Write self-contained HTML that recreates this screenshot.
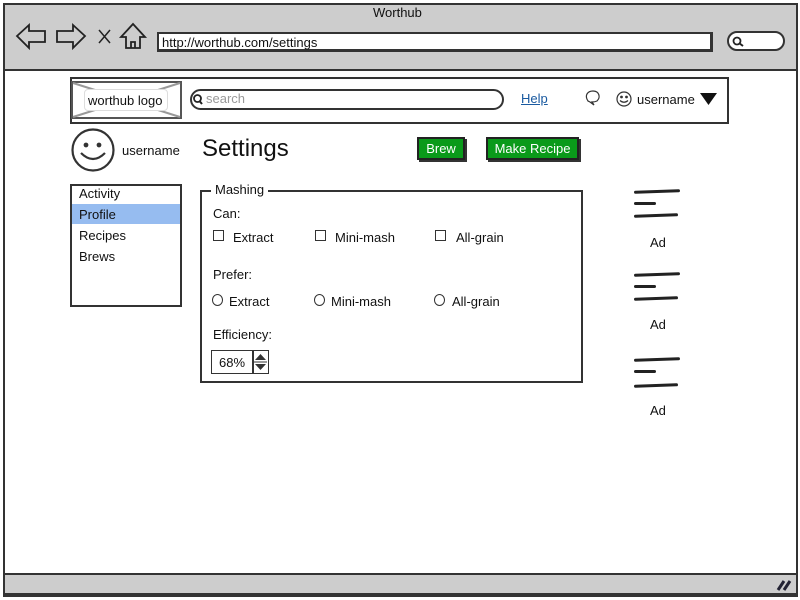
<!DOCTYPE html>
<html><head><meta charset="utf-8"><style>
*{margin:0;padding:0;box-sizing:border-box}
body{width:800px;height:600px;background:#fff;position:relative;overflow:hidden;font-family:"Liberation Sans",sans-serif;color:#111;font-size:13px}
.a{position:absolute}
.t{position:absolute;white-space:nowrap;line-height:1}
.btn{position:absolute;background:#0a9a1a;color:#fff;border:2px solid #222;box-shadow:2px 2px 0 #333;font-size:13px;text-align:center;line-height:19px}
.ad{position:absolute;width:50px}
.ad i{position:absolute;left:0;height:3px;background:#222;border-radius:2px}
.cb{position:absolute;width:11px;height:11px;border:1.5px solid #333}
.rb{position:absolute;width:11px;height:12px;border:1.8px solid #333;border-radius:50%}
</style></head><body>
<div class="a" style="left:3px;top:3px;width:795px;height:594px;border:2px solid #333"></div>
<div class="a" style="left:3px;top:3px;width:795px;height:68px;background:#cdcdcd;border:2px solid #333"></div>
<div class="t" style="left:373px;top:6px;font-size:13px">Worthub</div>
<svg class="a" style="left:14px;top:22px" width="140" height="30" viewBox="0 0 140 30" fill="none" stroke="#222" stroke-width="1.8">
<path d="M3 14 L15 3 L15 9 L31 9 L31 20 L15 20 L15 26 Z"/>
<path d="M71 14 L59 3 L59 9 L43 9 L43 20 L59 20 L59 26 Z"/>
<path d="M85 8 L96 21 M96 8 L85 21" stroke-width="1.5"/>
<path d="M119 2 L107 15 L112 15 L112 26 L126 26 L126 15 L131 15 Z M117 26 L117 20 L121 20 L121 26"/>
</svg>
<div class="a" style="left:157px;top:32px;width:556px;height:20px;background:#fff;border:2px solid #333;border-right-width:3px;border-bottom-width:3px"></div>
<div class="t" style="left:162px;top:36px;font-size:13px">http://worthub.com/settings</div>
<div class="a" style="left:727px;top:31px;width:58px;height:20px;background:#fff;border:2px solid #333;border-radius:10px"></div>
<svg class="a" style="left:732px;top:36px" width="12" height="12"><circle cx="5" cy="5" r="3.5" fill="none" stroke="#222" stroke-width="1.8"/><path d="M7 7 L11 10" stroke="#222" stroke-width="2"/></svg>

<div class="a" style="left:70px;top:77px;width:659px;height:47px;border:2px solid #333"></div>
<div class="a" style="left:71px;top:81px;width:111px;height:38px;background:#fff;border:2px solid #555"></div>
<svg class="a" style="left:71px;top:81px" width="111" height="38"><path d="M2 2 L109 36 M109 2 L2 36" stroke="#999" stroke-width="2"/></svg>
<div class="a" style="left:84px;top:89px;width:84px;height:22px;background:#fff;border-radius:4px;border:1px solid #ddd"></div>
<div class="t" style="left:88px;top:94px;font-size:13px">worthub logo</div>
<div class="a" style="left:190px;top:89px;width:314px;height:21px;border:2px solid #333;border-radius:11px"></div>
<svg class="a" style="left:192px;top:93px" width="12" height="13"><circle cx="5.5" cy="5.5" r="3.5" fill="none" stroke="#222" stroke-width="1.8"/><path d="M7.5 8 L10 11" stroke="#222" stroke-width="2"/></svg>
<div class="t" style="left:206px;top:92px;font-size:13px;color:#999">search</div>
<div class="t" style="left:521px;top:92px;font-size:13px;color:#1a5aa0;text-decoration:underline">Help</div>
<svg class="a" style="left:584px;top:89px" width="50" height="20" fill="none" stroke="#333" stroke-width="1.2"><path d="M4 12 C0 6 4 2 9 2 C15 2 17 8 13 12 C11 13 9 13 8 13 L10 16 L6 13 Z"/><circle cx="40" cy="10" r="7"/><circle cx="37.5" cy="8" r=".8" fill="#333"/><circle cx="42.5" cy="8" r=".8" fill="#333"/><path d="M36 11.5 Q40 15 44 11.5"/></svg>
<div class="t" style="left:637px;top:93px;font-size:13px">username</div>
<svg class="a" style="left:700px;top:93px" width="17" height="13"><path d="M0 0 L17 0 L8.5 12 Z" fill="#111"/></svg>

<svg class="a" style="left:70px;top:127px" width="47" height="47" fill="none" stroke="#333" stroke-width="2.2"><circle cx="23" cy="23" r="20.5"/><circle cx="16" cy="18" r="1.3" fill="#333"/><circle cx="29" cy="18" r="1.3" fill="#333"/><path d="M11 26 Q23 38 35 26"/></svg>
<div class="t" style="left:122px;top:144px;font-size:13px">username</div>
<div class="t" style="left:202px;top:137px;font-size:24px">Settings</div>
<div class="btn" style="left:417px;top:137px;width:48px;height:23px">Brew</div>
<div class="btn" style="left:486px;top:137px;width:93px;height:23px">Make Recipe</div>

<div class="a" style="left:70px;top:184px;width:112px;height:123px;border:2px solid #333"></div>
<div class="a" style="left:72px;top:204px;width:108px;height:20px;background:#96bcf0"></div>
<div class="t" style="left:79px;top:187px">Activity</div>
<div class="t" style="left:79px;top:208px">Profile</div>
<div class="t" style="left:79px;top:229px">Recipes</div>
<div class="t" style="left:79px;top:250px">Brews</div>

<div class="a" style="left:200px;top:190px;width:383px;height:193px;border:2px solid #333"></div>
<div class="t" style="left:211px;top:183px;background:#fff;padding:0 4px">Mashing</div>
<div class="t" style="left:213px;top:207px">Can:</div>
<div class="cb" style="left:213px;top:230px"></div><div class="t" style="left:233px;top:231px">Extract</div>
<div class="cb" style="left:315px;top:230px"></div><div class="t" style="left:335px;top:231px">Mini-mash</div>
<div class="cb" style="left:435px;top:230px"></div><div class="t" style="left:456px;top:231px">All-grain</div>
<div class="t" style="left:213px;top:268px">Prefer:</div>
<div class="rb" style="left:212px;top:294px"></div><div class="t" style="left:229px;top:295px">Extract</div>
<div class="rb" style="left:314px;top:294px"></div><div class="t" style="left:331px;top:295px">Mini-mash</div>
<div class="rb" style="left:434px;top:294px"></div><div class="t" style="left:452px;top:295px">All-grain</div>
<div class="t" style="left:213px;top:328px">Efficiency:</div>
<div class="a" style="left:211px;top:350px;width:58px;height:24px;border:1.5px solid #333"></div>
<div class="t" style="left:219px;top:356px">68%</div>
<div class="a" style="left:252px;top:351px;width:1.5px;height:22px;background:#333"></div>
<svg class="a" style="left:254px;top:352px" width="13" height="20"><path d="M1 8 L6.5 2 L12 8 Z M1 12 L6.5 18 L12 12 Z" fill="#333"/><path d="M0 10 L13 10" stroke="#333"/></svg>

<div class="ad" style="left:634px;top:190px"><i style="top:0;width:46px;transform:rotate(-2deg)"></i><i style="top:12px;width:22px"></i><i style="top:24px;width:44px;transform:rotate(-2deg)"></i></div>
<div class="t" style="left:650px;top:236px">Ad</div>
<div class="ad" style="left:634px;top:273px"><i style="top:0;width:46px;transform:rotate(-2deg)"></i><i style="top:12px;width:22px"></i><i style="top:24px;width:44px;transform:rotate(-2deg)"></i></div>
<div class="t" style="left:650px;top:318px">Ad</div>
<div class="ad" style="left:634px;top:358px"><i style="top:0;width:46px;transform:rotate(-2deg)"></i><i style="top:12px;width:22px"></i><i style="top:26px;width:44px;transform:rotate(-2deg)"></i></div>
<div class="t" style="left:650px;top:404px">Ad</div>

<div class="a" style="left:3px;top:573px;width:795px;height:22px;background:#cdcdcd;border:2px solid #333"></div>
<svg class="a" style="left:776px;top:578px" width="16" height="14"><path d="M2 12 L8 3 M8 12 L14 3" stroke="#223" stroke-width="3"/></svg>
</body></html>
